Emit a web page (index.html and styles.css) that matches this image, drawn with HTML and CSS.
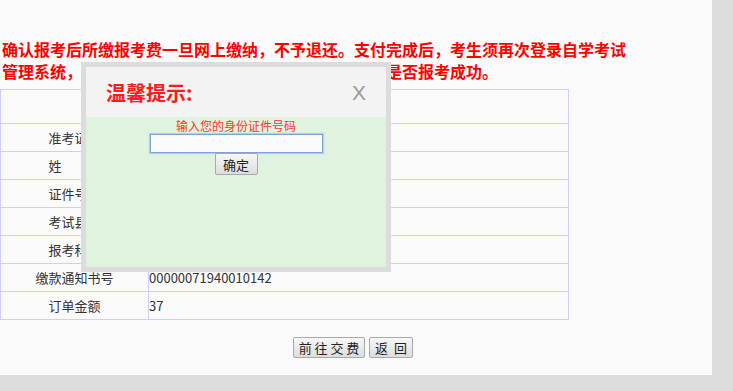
FILE: index.html
```html
<!DOCTYPE html>
<html lang="zh-CN">
<head>
    <meta charset="UTF-8">
    <meta name="viewport" content="width=device-width, initial-scale=1.0">
    <title>报考缴费确认</title>
    <link rel="stylesheet" href="styles.css">
</head>
<body>

    <div class="page">
        <p class="notice">确认报考后所缴报考费一旦网上缴纳，不予退还。支付完成后，考生须再次登录自学考试管理系统，查看订单的支付状态及报考信息，以便确认是否报考成功。</p>

        <table class="info-table">
            <colgroup>
                <col class="col-label">
                <col class="col-value">
            </colgroup>
            <tr class="head-row">
                <td colspan="2"></td>
            </tr>
            <tr>
                <td class="label">准考证号</td>
                <td class="value"></td>
            </tr>
            <tr>
                <td class="label">姓　　名</td>
                <td class="value"></td>
            </tr>
            <tr>
                <td class="label">证件号码</td>
                <td class="value"></td>
            </tr>
            <tr>
                <td class="label">考试县区</td>
                <td class="value"></td>
            </tr>
            <tr>
                <td class="label">报考科目</td>
                <td class="value"></td>
            </tr>
            <tr>
                <td class="label">缴款通知书号</td>
                <td class="value">00000071940010142</td>
            </tr>
            <tr>
                <td class="label">订单金额</td>
                <td class="value">37</td>
            </tr>
        </table>

        <div class="actions">
            <button class="btn btn-go">前 往 交 费</button>
            <button class="btn btn-back">返&nbsp;&nbsp;回</button>
        </div>
    </div>

    <!-- popup asking for the ID number -->
    <div class="dialog">
        <div class="dialog-title">
            <span class="dialog-heading">温馨提示:</span>
            <span class="dialog-close">X</span>
        </div>
        <div class="dialog-body">
            <div class="dialog-tip">输入您的身份证件号码</div>
            <input class="id-input" type="text">
            <button class="btn btn-ok">确定</button>
        </div>
    </div>

</body>
</html>
```

FILE: styles.css
```css
body {
    margin: 0;
    padding: 0;
    background-color: #dcdcdc;
    font-family: "Microsoft YaHei", "Noto Sans CJK SC", sans-serif;
    font-size: 13px;
    color: #333;
    position: relative;
    height: 391px;
    overflow: hidden;
}

/* --- main page area --- */
.page {
    width: 712px;
    height: 375px;
    background-color: #fafafa;
    padding-top: 38px;
    box-sizing: border-box;
}

.notice {
    margin: 0 0 7px 0;
    padding-left: 2px;
    width: 630px;
    font-size: 16px;
    line-height: 22px;
    font-weight: bold;
    color: #ff0000;
}

/* --- info table --- */
.info-table {
    border-collapse: collapse;
    width: 569px;
    table-layout: fixed;
}

.col-label {
    width: 148px;
}

.info-table td {
    border: 1px solid #cfcfff;
    height: 27px;
    padding: 0;
    line-height: 16px;
}

.info-table .head-row td {
    height: 33px;
}

.info-table .label {
    text-align: center;
}

.info-table .value {
    text-align: left;
}

/* --- buttons --- */
.actions {
    margin-top: 17px;
    padding-right: 6px;
    text-align: center;
    font-size: 0;
}

.btn {
    font-family: "Microsoft YaHei", "Noto Sans CJK SC", sans-serif;
    font-size: 13px;
    color: #222;
    height: 21px;
    padding: 0;
    line-height: 17px;
    border: 1px solid #a9a9a9;
    border-radius: 2px;
    background: linear-gradient(#f7f7f7, #dddddd);
    vertical-align: top;
}

.btn-go {
    width: 72px;
}

.btn-back {
    width: 44px;
    margin-left: 4px;
}

/* --- dialog --- */
.dialog {
    position: absolute;
    left: 81px;
    top: 62px;
    width: 300px;
    height: 200px;
    border: 5px solid #dcdcdc;
    background-color: #dff3de;
}

.dialog-title {
    height: 50px;
    background-color: #f3f3f3;
    display: flex;
    align-items: center;
    justify-content: space-between;
    padding: 0 20px 0 20px;
}

.dialog-heading {
    font-size: 20px;
    font-weight: bold;
    color: #ff1a1a;
}

.dialog-close {
    font-family: "Liberation Sans", Arial, sans-serif;
    font-size: 21px;
    color: #999;
    padding-top: 1px;
}

.dialog-body {
    display: flex;
    flex-direction: column;
    align-items: center;
    padding-top: 1px;
}

.dialog-tip {
    font-size: 12px;
    line-height: 16px;
    color: #ff3333;
}

.id-input {
    width: 173px;
    height: 19px;
    box-sizing: border-box;
    border: 1px solid #7fa2d6;
    box-shadow: 0 0 1px 1px #b9cdee;
    background-color: #fbfbfb;
    padding: 0 2px;
    margin: 0;
}

.btn-ok {
    width: 43px;
    height: 22px;
}
```
